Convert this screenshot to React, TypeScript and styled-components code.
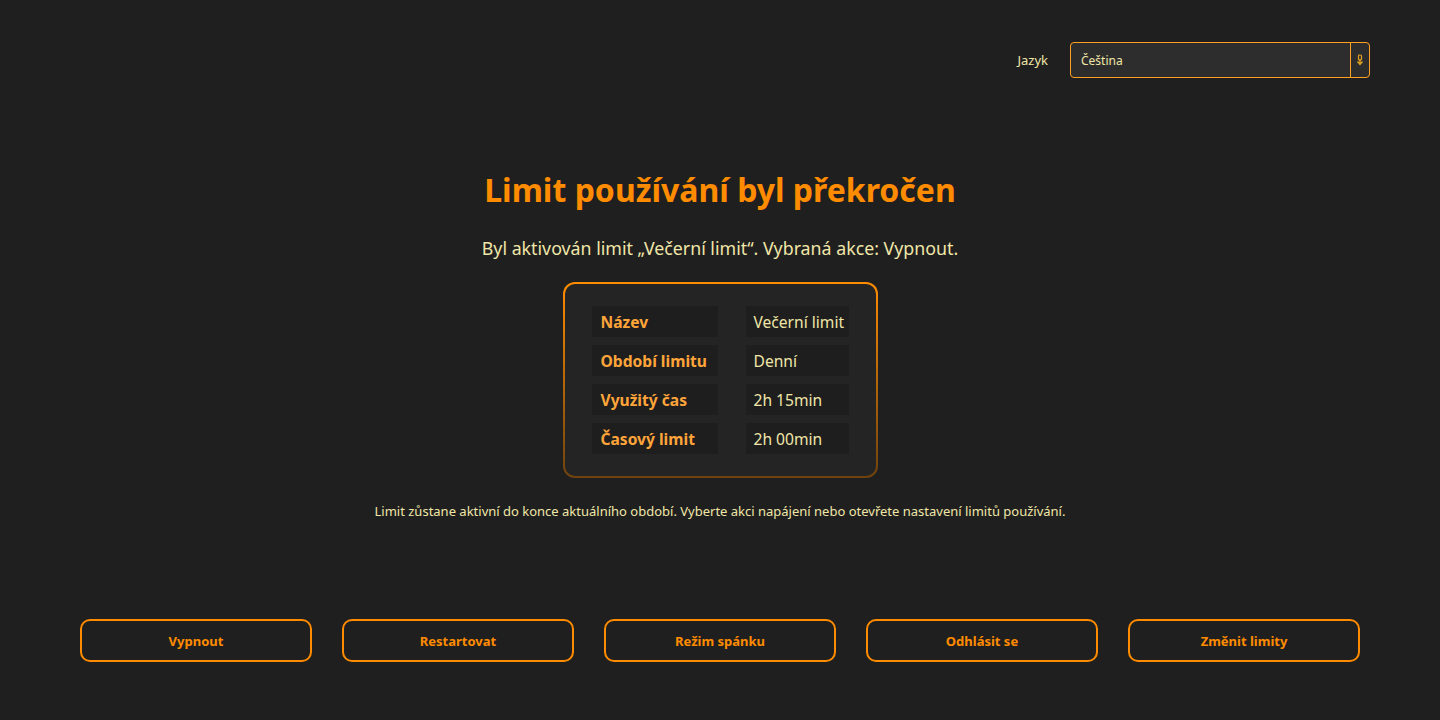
import React, { useState } from "react";
import styled, { createGlobalStyle } from "styled-components";

const ORANGE = "#ff8c00";
const PALE = "#f0e6a8";

const GlobalStyle = createGlobalStyle`
  html, body {
    margin: 0;
    padding: 0;
    background: #1f1f1f;
  }
  body {
    font-family: "Noto Sans", "Open Sans", sans-serif;
    color: ${PALE};
  }
`;

const Page = styled.div`
  height: 720px;
  display: flex;
  flex-direction: column;
  box-sizing: border-box;
`;

const Header = styled.header`
  display: flex;
  justify-content: flex-end;
  align-items: center;
  gap: 22px;
  padding: 42px 70px 0;
`;

const Label = styled.label`
  font-size: 13px;
  color: ${PALE};
`;

const SelectBox = styled.div`
  position: relative;
  width: 300px;
  height: 36px;
  box-sizing: border-box;
  border: 1px solid #ffa020;
  border-radius: 4px;
  background: #2d2d2d;
  display: flex;
  align-items: center;
`;

const Select = styled.select`
  appearance: none;
  flex: 1;
  height: 100%;
  background: transparent;
  border: none;
  outline: none;
  color: ${PALE};
  font-family: inherit;
  font-size: 12px;
  padding: 0 10px;
  option {
    background: #2d2d2d;
  }
`;

const Arrow = styled.span`
  width: 18px;
  height: 100%;
  border-left: 1px solid #ffa020;
  display: flex;
  align-items: center;
  justify-content: center;
  pointer-events: none;
`;

const Main = styled.main`
  flex: 1;
  display: flex;
  flex-direction: column;
  align-items: center;
  padding-top: 90px;
`;

const Title = styled.h1`
  margin: 0;
  font-size: 32px;
  font-weight: 700;
  color: ${ORANGE};
  line-height: 44px;
`;

const Subtitle = styled.p`
  margin: 24px 0 0;
  font-size: 17.8px;
  line-height: 24px;
  color: ${PALE};
`;

const Card = styled.section`
  margin-top: 22px;
  padding: 22px 27px;
  border-radius: 12px;
  border: 2px solid transparent;
  background:
    linear-gradient(#242424, #242424) padding-box,
    linear-gradient(to bottom, #ff8c00, #6e420e) border-box;
`;

const Table = styled.div`
  display: grid;
  grid-template-columns: 126px 103px;
  column-gap: 28px;
  row-gap: 8px;
`;

const Cell = styled.div<{ $head?: boolean }>`
  background: #1e1e1e;
  height: 31px;
  display: flex;
  align-items: center;
  padding: 0 0 0 ${(p) => (p.$head ? 9 : 8)}px;
  font-size: 15.6px;
  font-weight: ${(p) => (p.$head ? 700 : 400)};
  color: ${(p) => (p.$head ? "#ffa53a" : PALE)};
  white-space: nowrap;
`;

const Note = styled.p`
  margin: 24px 0 0;
  font-size: 13px;
  color: ${PALE};
`;

const Footer = styled.footer`
  display: grid;
  grid-template-columns: repeat(5, 1fr);
  gap: 30px;
  padding: 0 80px 58px;
`;

const ActionButton = styled.button`
  height: 43px;
  background: transparent;
  border: 2px solid ${ORANGE};
  border-radius: 10px;
  color: ${ORANGE};
  font-family: inherit;
  font-size: 13px;
  font-weight: 700;
  cursor: pointer;
  &:hover {
    background: rgba(255, 140, 0, 0.08);
  }
`;

const rows = [
  { key: "Název", value: "Večerní limit" },
  { key: "Období limitu", value: "Denní" },
  { key: "Využitý čas", value: "2h 15min" },
  { key: "Časový limit", value: "2h 00min" },
];

const actions = ["Vypnout", "Restartovat", "Režim spánku", "Odhlásit se", "Změnit limity"];

const App: React.FC = () => {
  const [lang, setLang] = useState("cs");

  return (
    <>
      <GlobalStyle />
      <Page>
        <Header>
          <Label htmlFor="lang">Jazyk</Label>
          <SelectBox>
            <Select id="lang" value={lang} onChange={(e) => setLang(e.target.value)}>
              <option value="cs">Čeština</option>
              <option value="en">English</option>
            </Select>
            <Arrow>
              <svg width="8" height="12" viewBox="0 0 8 12">
                <rect x="2.5" y="1" width="3" height="5" rx="1" fill="none" stroke="#e0a020" strokeWidth="1.2" />
                <path d="M4 5v5M1.5 7.5 4 10.5l2.5-3" fill="none" stroke="#e0a020" strokeWidth="1.4" />
              </svg>
            </Arrow>
          </SelectBox>
        </Header>
        <Main>
          <Title>Limit používání byl překročen</Title>
          <Subtitle>Byl aktivován limit „Večerní limit“. Vybraná akce: Vypnout.</Subtitle>
          <Card>
            <Table>
              {rows.map((r) => (
                <React.Fragment key={r.key}>
                  <Cell $head>{r.key}</Cell>
                  <Cell>{r.value}</Cell>
                </React.Fragment>
              ))}
            </Table>
          </Card>
          <Note>
            Limit zůstane aktivní do konce aktuálního období. Vyberte akci napájení nebo otevřete nastavení limitů
            používání.
          </Note>
        </Main>
        <Footer>
          {actions.map((a) => (
            <ActionButton key={a}>{a}</ActionButton>
          ))}
        </Footer>
      </Page>
    </>
  );
};

export default App;
